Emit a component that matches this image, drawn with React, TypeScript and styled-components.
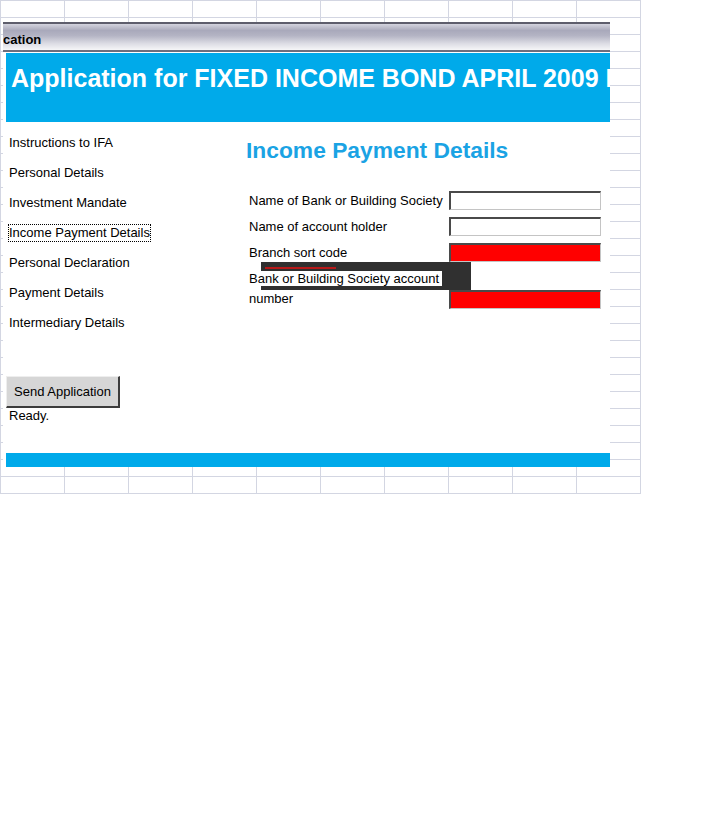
import React from "react";
import styled, { createGlobalStyle } from "styled-components";

const Global = createGlobalStyle`
  html, body { margin: 0; padding: 0; background: #ffffff; }
  body { font-family: "Liberation Sans", Arial, sans-serif; }
`;

const Sheet = styled.div`
  position: relative;
  width: 641px;
  height: 494px;
  background-color: #ffffff;
  background-image:
    linear-gradient(to right, #d3d6e2 1px, transparent 1px),
    linear-gradient(to bottom, #d3d6e2 1px, transparent 1px);
  background-size: 64px 17px;
  background-position: 0 0, 0 0;
`;

const Window = styled.div`
  position: absolute;
  left: 3px;
  top: 22px;
  width: 607px;
  display: flex;
  flex-direction: column;
  background: #ffffff;
`;

const TitleBar = styled.div`
  box-sizing: content-box;
  border-top: 2px solid #5e5e6c;
  border-bottom: 2px solid #6e6e7c;
  background: linear-gradient(
    to bottom,
    #d4d4de 0%,
    #a9a9bb 25%,
    #b4b4c4 45%,
    #dcdce4 75%,
    #f6f6f8 100%
  );
  display: flex;
  align-items: center;
  padding-top: 4px;
  height: 22px;
  font-size: 13px;
  font-weight: bold;
  color: #000;
  overflow: hidden;
  white-space: nowrap;
`;

const Body = styled.div`
  display: flex;
  flex-direction: column;
  padding: 1px 0 0 3px;
  background: #ffffff;
`;

const Banner = styled.div`
  height: 69px;
  background: #00aaea;
  color: #ffffff;
  font-size: 25px;
  font-weight: bold;
  white-space: nowrap;
  overflow: hidden;
  display: flex;
  align-items: center;
  padding-left: 5px;
  padding-bottom: 19px;
  box-sizing: border-box;
`;

const Content = styled.div`
  height: 331px;
  display: flex;
`;

const LeftColumn = styled.div`
  width: 240px;
  padding-top: 12px;
  display: flex;
  flex-direction: column;
  align-items: flex-start;
`;

const NavList = styled.div`
  display: flex;
  flex-direction: column;
  align-items: flex-start;
  gap: 12px;
  padding-left: 2px;
`;

const NavItem = styled.div<{ $active?: boolean }>`
  font-size: 13px;
  line-height: 16px;
  color: #000;
  border: 1px dotted ${(p) => (p.$active ? "#000" : "transparent")};
  padding: 0;
  white-space: nowrap;
`;

const SendButton = styled.button`
  margin-top: 44px;
  width: 114px;
  height: 32px;
  box-sizing: border-box;
  background: #d6d6d6;
  border-style: solid;
  border-width: 1px 2px 2px 1px;
  border-color: #eeeeee #3c3c3c #3c3c3c #eeeeee;
  font-family: "Liberation Sans", Arial, sans-serif;
  font-size: 13px;
  color: #000;
  padding: 0;
`;

const Status = styled.div`
  padding-left: 3px;
  font-size: 13px;
  line-height: 15px;
  color: #000;
`;

const MainColumn = styled.div`
  flex: 1;
  display: flex;
  flex-direction: column;
`;

const Heading = styled.div`
  margin-top: 15px;
  font-size: 22.8px;
  line-height: 26px;
  font-weight: bold;
  color: #1aa3e4;
`;

const Form = styled.div`
  position: relative;
  margin-top: 28px;
  display: flex;
  flex-direction: column;
  gap: 7px;
  padding-left: 3px;
`;

const Row = styled.div<{ $tall?: boolean }>`
  display: flex;
  align-items: ${(p) => (p.$tall ? "flex-end" : "center")};
  height: ${(p) => (p.$tall ? "40px" : "19px")};
`;

const Label = styled.div`
  width: 200px;
  font-size: 13px;
  line-height: 20px;
  color: #000;
  white-space: nowrap;
`;

const Highlight = styled.span`
  position: relative;
  z-index: 1;
  background: #ffffff;
  padding-right: 3px;
`;

const Field = styled.div<{ $invalid?: boolean }>`
  width: 152px;
  height: 19px;
  box-sizing: border-box;
  border-style: solid;
  border-width: 2px 1px 1px 2px;
  border-color: #4a4a4a #c4c4c4 #c4c4c4 #4a4a4a;
  background: ${(p) => (p.$invalid ? "#ff0000" : "#ffffff")};
`;

const Smudge = styled.div`
  position: absolute;
  left: 15px;
  top: 71px;
  width: 210px;
  height: 28px;
  background: #303030;
`;

const SmudgeLine = styled.div`
  position: absolute;
  left: 19px;
  top: 76px;
  width: 71px;
  height: 2px;
  background: #b81818;
`;

const Footer = styled.div`
  height: 14px;
  background: #00aaea;
`;

const navItems = [
  "Instructions to IFA",
  "Personal Details",
  "Investment Mandate",
  "Income Payment Details",
  "Personal Declaration",
  "Payment Details",
  "Intermediary Details",
];

export default function App() {
  return (
    <>
      <Global />
      <Sheet>
        <Window>
          <TitleBar>cation</TitleBar>
          <Body>
            <Banner>Application for FIXED INCOME BOND APRIL 2009 I</Banner>
            <Content>
              <LeftColumn>
                <NavList>
                  {navItems.map((item) => (
                    <NavItem key={item} $active={item === "Income Payment Details"}>
                      {item}
                    </NavItem>
                  ))}
                </NavList>
                <SendButton>Send Application</SendButton>
                <Status>Ready.</Status>
              </LeftColumn>
              <MainColumn>
                <Heading>Income Payment Details</Heading>
                <Form>
                  <Row>
                    <Label>Name of Bank or Building Society</Label>
                    <Field />
                  </Row>
                  <Row>
                    <Label>Name of account holder</Label>
                    <Field />
                  </Row>
                  <Row>
                    <Label>Branch sort code</Label>
                    <Field $invalid />
                  </Row>
                  <Row $tall>
                    <Label>
                      <Highlight>Bank or Building Society account</Highlight>
                      <br />
                      number
                    </Label>
                    <Field $invalid />
                  </Row>
                  <Smudge />
                  <SmudgeLine />
                </Form>
              </MainColumn>
            </Content>
            <Footer />
          </Body>
        </Window>
      </Sheet>
    </>
  );
}
